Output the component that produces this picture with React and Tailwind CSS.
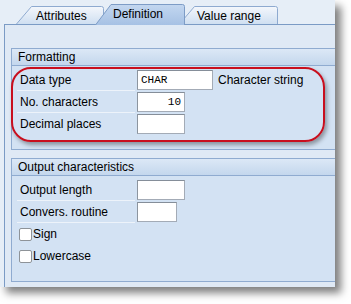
function Tab({ boxClass, width, height, label, active, textClass, d }) {
  const gid = active ? "gActive" : "gInactive";
  return (
    <div className={boxClass}>
      <svg className="absolute left-0 top-0" width={width} height={height} viewBox={`0 0 ${width} ${height}`}>
        <defs>
          <linearGradient id={gid} x1="0" y1="0" x2="0" y2="1">
            {active ? (
              <>
                <stop offset="0" stopColor="#c3d7f0" />
                <stop offset="1" stopColor="#a6c1e4" />
              </>
            ) : (
              <>
                <stop offset="0" stopColor="#f4f7fc" />
                <stop offset="1" stopColor="#cfdff1" />
              </>
            )}
          </linearGradient>
        </defs>
        <path d={d} fill={`url(#${gid})`} stroke={active ? "#7d9cc6" : "#8eaad0"} strokeWidth="1" />
      </svg>
      <span className={textClass}>{label}</span>
    </div>
  );
}

function Field({ label, widthClass, value, align, after, sep = true }) {
  return (
    <div className="flex items-center h-[22px]">
      <div
        className={
          sep
            ? "ml-[5px] w-[118px] h-full pl-[3px] flex items-center border-b border-[#edf3fa]"
            : "ml-[5px] w-[118px] h-full pl-[3px] flex items-center"
        }
      >
        {label}
      </div>
      <div
        className={
          "ml-[2px] h-[20px] bg-white border border-[#a3abb6] border-t-[#858e99] border-l-[#8c959f] flex items-center font-['Liberation_Mono',monospace] text-[11px] " +
          widthClass +
          (align === "right" ? " justify-end pr-[3px]" : " pl-[3px]")
        }
      >
        {value}
      </div>
      {after ? <span className="ml-[5px]">{after}</span> : null}
    </div>
  );
}

function Check({ label }) {
  return (
    <div className="flex items-center h-[22px] pl-[7px]">
      <div className="w-[13px] h-[13px] bg-white border border-[#8e9398] rounded-[2px]" />
      <span className="ml-[1px]">{label}</span>
    </div>
  );
}

function GroupHeader({ title }) {
  return (
    <div className="h-[17px] bg-gradient-to-b from-[#dce8f6] to-[#c4d7ed] border-b border-[#8fabd0] pl-[6px] flex items-center">
      {title}
    </div>
  );
}

export default function App() {
  return (
    <div className="w-[351px] h-[304px] bg-white">
      <div className="w-[335px] h-[287px] flex flex-col overflow-hidden bg-[#e6eef7] shadow-[6px_6px_8px_rgba(0,0,0,0.5)] text-[12px] leading-none text-black font-['Liberation_Sans',Arial,sans-serif]">
        <div className="h-[24px] flex items-end pl-[16px] shrink-0">
          <Tab
            boxClass="relative w-[88px] h-[18px]"
            width={88}
            height={18}
            label="Attributes"
            d="M0.5 18 L15.5 0.5 H85.5 Q87.5 0.5 87.5 2.5 V18"
            textClass="relative h-full flex items-center pl-[20px] pt-[1px]"
          />
          <Tab
            boxClass="relative z-10 ml-[-9px] mb-[-1px] w-[90px] h-[21px]"
            width={90}
            height={21}
            active
            label="Definition"
            d="M0.5 21 L16 0.5 H87.5 Q89.5 0.5 89.5 2.5 V21"
            textClass="relative h-full flex items-center pl-[18px] pb-[1px]"
          />
          <Tab
            boxClass="relative ml-[-6px] w-[99px] h-[18px]"
            width={99}
            height={18}
            label="Value range"
            d="M0.5 18 L15.5 0.5 H96.5 Q98.5 0.5 98.5 2.5 V18"
            textClass="relative h-full flex items-center pl-[18px] pt-[1px]"
          />
        </div>
        <div className="flex-1 ml-[4px] border-l border-t border-[#7b9bc5] bg-[#dfe9f5] pl-[6px] pt-[23px]">
          <div className="relative mr-[-20px] border border-[#8fabd0] border-r-0">
            <GroupHeader title="Formatting" />
            <div className="bg-[#d3e2f3] pt-[3px] pb-[14px]">
              <Field label="Data type" widthClass="w-[76px]" value="CHAR" after="Character string" />
              <Field label="No. characters" widthClass="w-[48px]" value="10" align="right" />
              <Field label="Decimal places" widthClass="w-[48px]" value="" sep={false} />
            </div>
            <div className="absolute left-[-1px] top-[18px] w-[314px] h-[75px] rounded-[20px] border-2 border-[#c80f1e] shadow-[2px_3px_4px_rgba(0,0,0,0.35)] pointer-events-none" />
          </div>
          <div className="mt-[8px] mr-[-20px] border border-[#8fabd0] border-r-0">
            <GroupHeader title="Output characteristics" />
            <div className="bg-[#d3e2f3] pt-[3px] pb-[14px]">
              <Field label="Output length" widthClass="w-[48px]" value="" />
              <Field label="Convers. routine" widthClass="w-[40px]" value="" />
              <Check label="Sign" />
              <Check label="Lowercase" />
            </div>
          </div>
        </div>
      </div>
    </div>
  );
}
